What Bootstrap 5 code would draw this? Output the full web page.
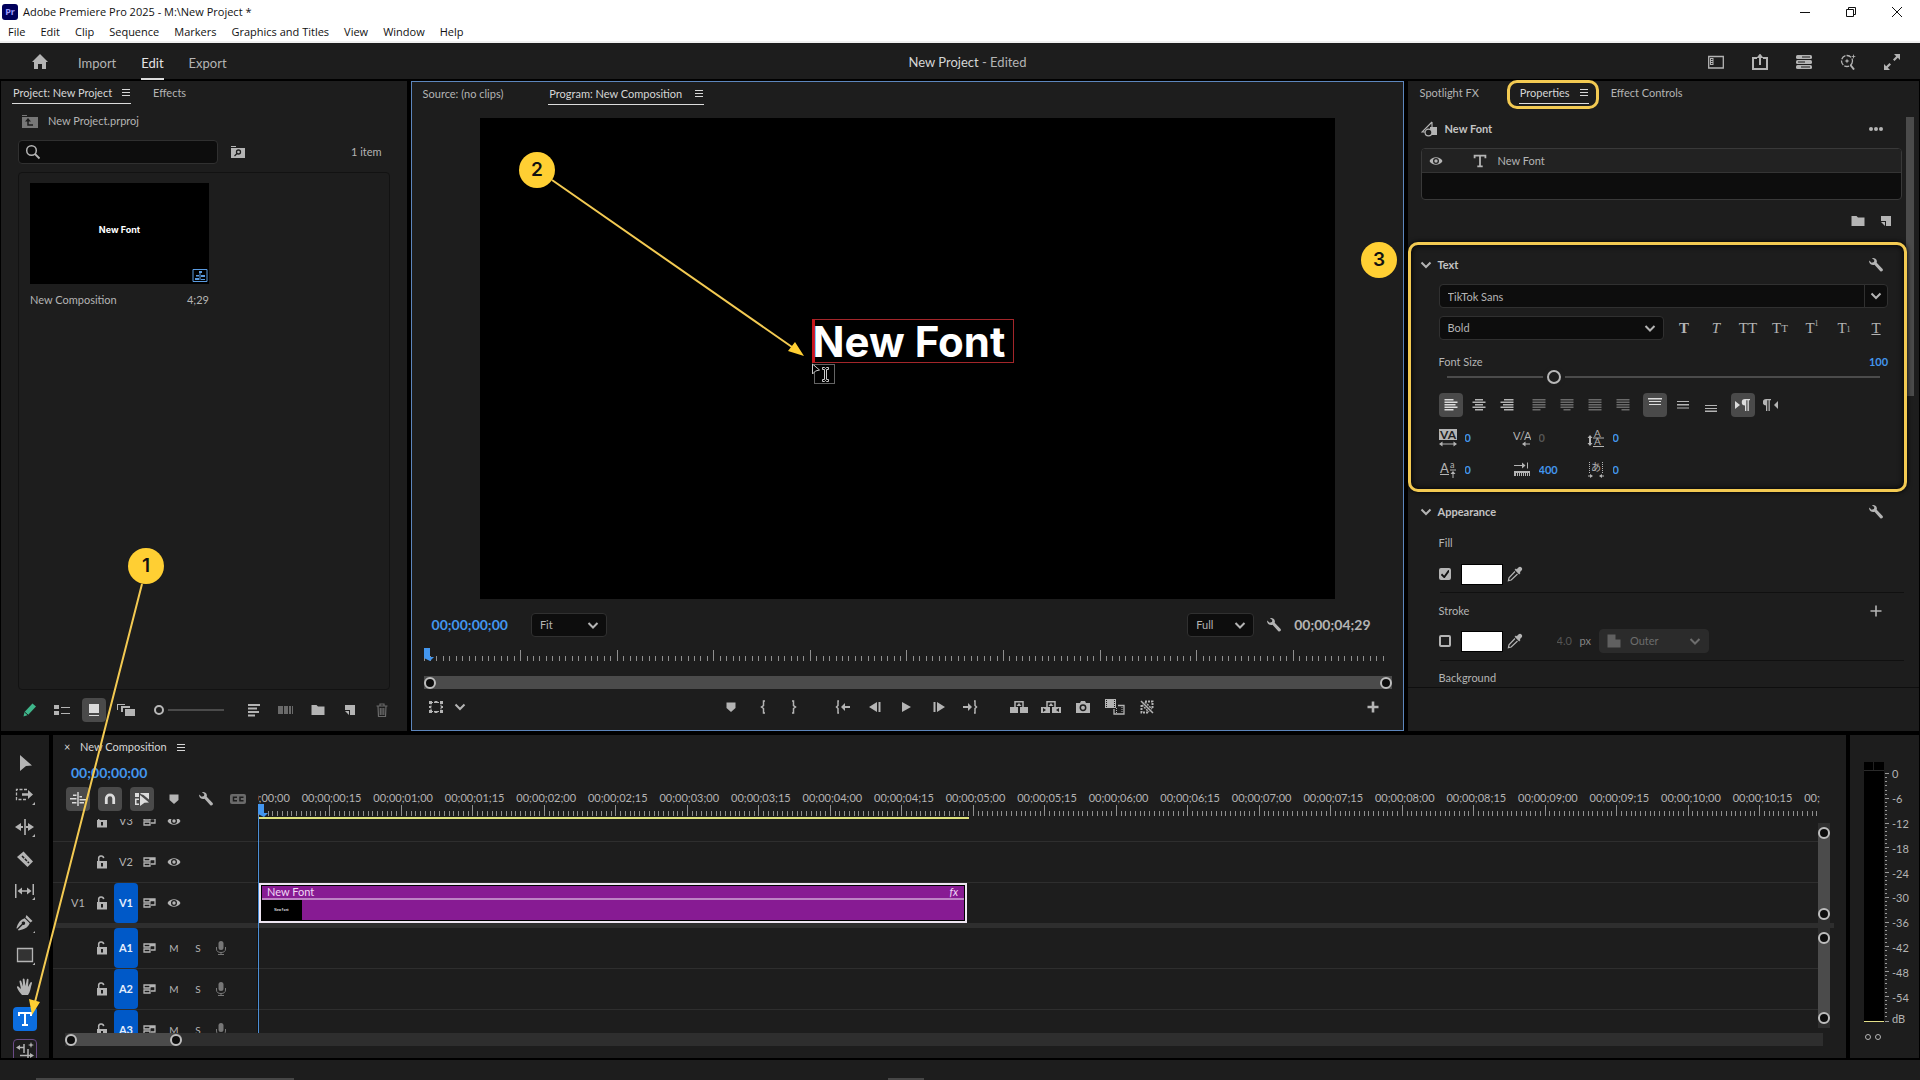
<!DOCTYPE html>
<html lang="en" data-bs-theme="dark">
<head>
<meta charset="utf-8">
<meta name="viewport" content="width=device-width, initial-scale=1">
<title>Adobe Premiere Pro 2025</title>
<link href="https://cdn.jsdelivr.net/npm/bootstrap@5.3.0/dist/css/bootstrap.min.css" rel="stylesheet">
<style>
:root{--panel:#1d1d1d;--well:#0d0d0d;--txt:#b4b4b4;--hi:#d6d6d6;--line:#2e2e2e;--blue:#4396ee;--gold:#ffcf33;--bar:#4b4b4b}
body{background:#000;color:var(--txt);font:400 11px/16px Lato,"Noto Sans",sans-serif;overflow:hidden}
svg{display:block;flex:none}
.ic{width:16px;height:16px;fill:currentColor}
.ib{width:24px;height:24px;padding:0;border:0;border-radius:4px;background:none;color:inherit;display:flex;align-items:center;justify-content:center;flex:none}
.ib.on{background:#4a4a4a;color:#dcdcdc}
.ib.dim{color:#6a6a6a}
.panel{background:var(--panel);min-width:0}
.hi{color:var(--hi)}
.blue{color:var(--blue)}
/* title and menu */
.winbar,.menus{background:#fff;color:#111;font-family:"Open Sans","Noto Sans",sans-serif}
.winbar{height:23px}
.winbar .ib{width:46px;height:20px}
.menus{height:20px;border-bottom:2px solid #f0f0f0;gap:15px;padding-left:8px}
.menus a,.modes a{color:inherit;text-decoration:none}
.prlogo{width:16px;height:16px;border-radius:3px;background:#00005b;color:#9b9bff;font:700 9px/15px "Open Sans",sans-serif;text-align:center;margin:0 5px 0 2px}
.appbar{height:36px;margin-bottom:2px;display:grid;grid-template-columns:1fr auto 1fr;font-size:13px;padding:0 16px 0 31px}
.modes{gap:25px}
.modes a{height:36px;line-height:38px}
.modes a.cur{border-bottom:2px solid #dcdcdc;color:#e4e4e4}
.apptitle{line-height:38px}
.apptools{gap:20px}
/* panels */
.upper{flex:650 1 0;min-height:0;gap:4px;padding:0 1px}
.lower{flex:323 1 0;min-height:0;gap:4px;padding:0 1px;margin-top:4px}
.p-project{flex:406 1 0}
.p-program{flex:992 1 0;border:1px solid #5d86bd}
.p-props{flex:512 1 0;position:relative}
.tabs{height:23px;margin-bottom:1px}
.tabs button{border:0;background:none;color:inherit;padding:1px 1px 0;height:23px;display:flex;align-items:center;justify-content:space-between;gap:10px;border-bottom:1px solid transparent;white-space:nowrap}
.tabs button.cur{color:var(--hi);border-bottom-color:#dcdcdc}
.tabs .wide{min-width:156px}
.burger{width:8px;height:7px;border:solid currentColor;border-width:1px 0;position:relative;flex:none}
.burger::after{content:"";position:absolute;left:0;right:0;top:2px;height:1px;background:currentColor}
.field,.field:focus,.field:disabled{background-color:var(--well);border:1px solid #303030;border-radius:4px;color:var(--txt);font-size:11px;line-height:16px;height:24px;padding:0 8px;box-shadow:none}
.form-select.field{--bs-form-select-bg-img:url("data:image/svg+xml,%3csvg xmlns='http://www.w3.org/2000/svg' viewBox='0 0 12 12'%3e%3cpath fill='none' stroke='%23b4b4b4' stroke-width='2' d='M1.500 4l4.500 4.500L10.500 4'/%3e%3c/svg%3e");background-size:12px 12px;background-position:right 7px center}
.searchbox{width:200px}
.searchbox .ic{position:absolute;left:7px;top:4px}
.searchbox input{width:100%;padding-left:28px}
.binbox{border:1px solid #121212;border-radius:4px;margin:8px 17px 0 17px;padding:10px 11px}
.clipcard{width:179px}
.thumb{aspect-ratio:179/101;background:#000;color:#fff;font:700 9px/16px Inter,"Open Sans",sans-serif;position:relative;padding-bottom:8px}
.thumb svg{position:absolute;right:1px;bottom:0}
.footbar{height:41px;padding:0 13px 2px 17px}
.zoomrange{width:70px}
.rng{appearance:none;background:none;height:12px;margin:0;padding:0}
.rng::-webkit-slider-runnable-track{height:2px;background:#4b4b4b}
.rng::-webkit-slider-thumb{appearance:none;width:14px;height:14px;border-radius:50%;border:2px solid #b8b8b8;background:var(--panel);margin-top:-6px;box-shadow:0 0 0 4px var(--panel)}
.rng.sm::-webkit-slider-thumb{width:10px;height:10px;margin-top:-4px}
/* monitor */
.stagewrap{margin-top:12px;min-height:0}
.stage{aspect-ratio:855/481;height:100%;background:#000}
.caption{position:relative;border:1px solid #a3262a;border-left:3px solid #c7161b;height:44px;width:202px;color:#fff;font:700 42px/44px Inter,"Open Sans",sans-serif;white-space:nowrap;text-indent:-2px;margin-left:11px;margin-bottom:36px}
.caption svg{position:absolute;left:-3px;top:43px}
.tc{font-size:14px;font-weight:700;color:var(--blue)}
.monrow{height:51px;padding:0 32px 0 20px}
.ticks{display:flex;justify-content:space-between;align-items:flex-end;height:11px}
.ticks i{width:1px;height:5px;background:#8f8f8f}
.ticks i.major{height:11px}
.monticks{margin:0 18px 0 12px;position:relative}
.head{position:absolute;left:0;top:-2px}
.zbar{height:13px;background:var(--bar);display:flex;justify-content:space-between;align-items:center}
.knob{width:12px;height:12px;border:2px solid #bdbdbd;border-radius:50%;background:var(--well);flex:none}
.transport{height:36px;margin:0 8px 5px 12px;display:grid;grid-template-columns:294fr 440px 234fr;align-items:center}
/* properties */
.layerbox{height:52px;margin:0 17px 0 13px;border:1px solid #393939;border-radius:4px;background:var(--well);overflow:hidden}
.layer{height:24px;background:#222;border-bottom:1px solid #343434}
.callbox{border:3px solid #f3ca52;border-radius:10px;margin-right:12px;padding:0 16px 7px 28px;position:relative;z-index:1;box-shadow:0 0 6px #000 inset,0 0 5px #000}
.sechead{height:39px;margin-left:-18px;gap:8px;padding-top:1px}
.sechead b,.ttl{color:#c4c4c4;font-weight:700}
.ring::after{content:"";position:absolute;inset:-1px -10px -6px -12px;border:3px solid #f3ca52;border-radius:10px}
.tstyles{gap:8px}
.tstyles .ib{font:15px/20px "Liberation Serif",serif}
.tstyles small{font-size:11px}
.tstyles .ss{font-size:8px}
.vals{height:24px;display:grid;grid-template-columns:74px 74px 74px}
.vals label{gap:8px}
.vals .ic{width:18px;height:18px}
.vals input,.numin{width:30px;border:0;background:none;color:var(--blue);padding:0;font-weight:700;font-size:11px}
.secrule{height:1px;background:#101010;margin-left:32px;margin-right:15px}
.chk{appearance:none;width:12px;height:12px;border:2px solid #b4b4b4;border-radius:2px;margin:0 10px 0 0}
.chk:checked{background:#b4b4b4 url("data:image/svg+xml,%3csvg xmlns='http://www.w3.org/2000/svg' viewBox='0 0 10 10'%3e%3cpath fill='none' stroke='%23111' stroke-width='2' d='M1 5l3 3 5-7'/%3e%3c/svg%3e") center/9px no-repeat}
.sw{appearance:none;width:42px;height:21px;border:1px solid #000;padding:0;background:#fff}
.sw::-webkit-color-swatch-wrapper{padding:0}
.sw::-webkit-color-swatch{border:0;border-radius:0}
.field.off,.field.off:disabled{--bs-form-select-bg-img:url("data:image/svg+xml,%3csvg xmlns='http://www.w3.org/2000/svg' viewBox='0 0 12 12'%3e%3cpath fill='none' stroke='%236d6d6d' stroke-width='2' d='M1.500 4l4.500 4.500L10.500 4'/%3e%3c/svg%3e");background-color:#2b2b2b;border-color:#2b2b2b;color:#6d6d6d;width:110px;padding-left:30px;opacity:1}
.outer{position:relative;margin-left:8px}
.outer>svg{position:absolute;left:7px;top:4px;color:#606060}
.vscroll{position:absolute;right:5px;top:36px;width:8px;height:279px;background:#4b4b4b}
/* timeline */
.p-tools{flex:0 0 48px;padding-top:16px;gap:8px;overflow:hidden}
.p-tools .ic{width:20px;height:20px}
.p-tools .typ{background:#0c6ee0;color:#fff}
.p-tools .gen{border:1px solid #6a4a86}
.p-time{flex:1 1 0}
.p-meter{flex:0 0 69px;padding:27px 0 0 14px}
.tlhead{flex:0 0 205px;padding-left:13px}
.rulerrow{height:32px}
.ruler{margin-right:26px;overflow:hidden;position:relative}
.lbls{height:18px;padding:3px 0 0 2px;display:flex;overflow:hidden}
.lbls span{flex:none;text-align:center;white-space:nowrap}
.workarea{height:2px;margin-top:1px;background:#dde07c}
.vtracks{height:104px;justify-content:flex-end}
.atracks{height:105px}
.trk{height:41px;flex:none;border-bottom:1px solid var(--line)}
.vtracks .trk:last-child{height:40px;border-bottom:0}
.trkhead{flex:0 0 205px;display:grid;grid-template-columns:24px 24px 24px 24px 24px 24px 22px;padding-left:13px;align-items:center;justify-items:center;font-size:11px;border-right:1px solid #111}
.trkhead .tgt{width:24px;height:100%;border:0;padding:0;background:none;color:var(--txt);border-radius:4px}
.trkhead .tgt.on{background:#0059c8;color:#e4eefc;font-weight:700}
.trkhead .ms{border:0;background:none;color:inherit;padding:0;font-size:10px}
.gapbar{height:5px;background:var(--line);margin:0 12px 0 1px}
.clip{height:40px;border:2px solid #efe6f2;outline:1px solid #000;outline-offset:-3px;background:#871b93;color:#f1d8f5;margin-left:1px}
.cliphd{height:15px;line-height:13px;padding:0 7px 0 6px;border-bottom:2px solid #bd83c5}
.clipth{width:41px;height:21px;background:#000;color:#ddd;font:700 3px/20px "Noto Sans",sans-serif;text-align:center}
.vbar{width:12px;margin-right:16px;background:var(--line)}
.vbar div{background:var(--bar);display:flex;flex-direction:column;justify-content:space-between;height:100%;border-radius:6px}
.vbar.v1{margin-top:4px;padding:4px 0 3px}
.vbar.v2{padding:4px 0 9px;margin-bottom:5px;padding-bottom:4px}
.hbar{height:13px;background:var(--line);margin:0 23px 12px 12px}
.hbar .zbar{width:117px;border-radius:6px;background:var(--bar)}
.playline{position:absolute;left:205px;top:29px;bottom:0;width:1px;background:#4c8fd6;z-index:2}
.mbar{width:20px;background:#000;border-bottom:1px solid #e3e08a;position:relative}
.mbar::before{content:"";position:absolute;left:9px;top:0;width:1px;height:8px;background:#222}
.mbar::after{content:"";position:absolute;left:0;right:0;top:8px;height:1px;background:#2a2a2a}
.mticks{width:8px;padding:11px 0 0 1px;display:flex;flex-direction:column;justify-content:space-between}
.mticks i{width:2px;height:1px;background:#9a9a9a}
.mticks i.major{width:4px}
.mlbls{padding-top:4px}
.mfoot{height:36px;padding:12px 0 0 1px;gap:4px}
.mfoot span{width:6px;height:6px;border:1px solid #b4b4b4;border-radius:50%}
.statusbar{height:20px;margin-top:2px;align-items:flex-end}
.peek{height:2px;background:#464646}
.marks{position:absolute;left:0;top:0;z-index:5;pointer-events:none}
</style>
</head>
<body class="vh-100 d-flex flex-column">
<svg width="0" height="0" class="position-absolute" aria-hidden="true"><defs>
<symbol id="home" viewBox="0 0 16 16"><path d="M8 0L0 8h2v7h4v-5h4v5h4V8h2z"/></symbol>
<symbol id="layout" viewBox="0 0 16 16"><path fill="none" stroke="currentColor" stroke-width="1.300" d="M.7 2.500h14.600v11.500H.7z"/><path d="M2 4h3.500v7H2zM3 5v1h1.500V5zm0 2v1h1.500V7zm0 2v1h1.500V9z" fill-rule="evenodd"/></symbol>
<symbol id="share" viewBox="0 0 16 16"><path fill="none" stroke="currentColor" stroke-width="2" d="M5 4H1v11h14V4h-4M8 11V2"/><path d="M8-.5L11.500 4h-7z"/></symbol>
<symbol id="stack" viewBox="0 0 16 16"><rect x="0" y="1" width="16" height="4" rx="1.500"/><rect x="0" y="6" width="16" height="4" rx="1.500"/><rect x="0" y="11" width="16" height="4" rx="1.500"/><path stroke="#1d1d1d" d="M6 3h8M2 8h7M5 13h9"/></symbol>
<symbol id="sparkle" viewBox="0 0 16 16"><circle cx="7" cy="7" r="5.500" fill="none" stroke="currentColor" stroke-width="1.300" stroke-dasharray="5 1.200"/><path stroke="currentColor" stroke-width="2" d="M10.500 11l3.500 4.500"/><path d="M7 4.500l.7 1.800L9.500 7l-1.800.7L7 9.500l-.7-1.800L4.500 7l1.800-.7zM13.500 0l.6 1.900 1.900.6-1.900.6-.6 1.900-.6-1.900-1.900-.6 1.900-.6z"/></symbol>
<symbol id="expand" viewBox="0 0 16 16"><path d="M10 0h6v6l-2.200-2.200L10.500 7 9 5.500l3.200-3.300zM6 16H0v-6l2.200 2.200L5.500 9 7 10.500l-3.200 3.300z"/></symbol>
<symbol id="folderup" viewBox="0 0 16 16"><path d="M0 2h5v1H0zM0 4h16v11H0z"/><path fill="none" stroke="#1d1d1d" stroke-width="1.500" d="M6 7v5h5"/><path fill="#1d1d1d" d="M6 5l3 3.500H3z"/></symbol>
<symbol id="search" viewBox="0 0 16 16"><circle cx="6.500" cy="6.500" r="4.800" fill="none" stroke="currentColor" stroke-width="1.500"/><path stroke="currentColor" stroke-width="1.800" d="M10 10l4.500 4.500"/></symbol>
<symbol id="findfolder" viewBox="0 0 16 16"><path d="M1 2h5v1H1zM1 4h14v10H1z"/><circle cx="8.500" cy="8" r="2" fill="none" stroke="#1d1d1d" stroke-width="1.300"/><path stroke="#1d1d1d" stroke-width="1.300" d="M7 9.500L4.500 12"/></symbol>
<symbol id="seq" viewBox="0 0 16 16"><path fill="none" stroke="currentColor" d="M1 1.500h14v12H1z"/><path d="M7 3h3v2H7zM4 7h3v1.500H4zM9 7h4v2H9zM3 10h4v2H3zM9 11h4v1H9z"/><path stroke="currentColor" d="M8 3v9"/></symbol>
<symbol id="pencil" viewBox="0 0 16 16"><path d="M1.500 14.500l1-4.500 8-8.500 3.500 3L6 13z"/><path stroke="#1d1d1d" d="M2.500 10L6 13"/></symbol>
<symbol id="list" viewBox="0 0 16 16"><path d="M0 3h5v4H0zM0 9h5v4H0zM7 5h9v1H7zM7 11h9v1H7z"/></symbol>
<symbol id="thumbv" viewBox="0 0 16 16"><path d="M3 2h10v9H3zM3 13h10v1H3z"/></symbol>
<symbol id="multi" viewBox="0 0 18 16"><path d="M0 2h8v1H1v5H0zM4 4h9v2H6v4H4zM8 7h10v7H8z"/></symbol>
<symbol id="sort" viewBox="0 0 16 16"><path d="M2 2h12v2H2zM2 5.500h9v2H2zM2 9h11v2H2zM2 12.500h7v2H2z"/></symbol>
<symbol id="bars" viewBox="0 0 16 16"><path d="M0 4h5v8H0zM6 4h4v8H6zM11 4h2v8h-2zM14 4h1v8h-1z"/></symbol>
<symbol id="folder" viewBox="0 0 16 16"><path d="M1.500 3h5l1.500 1.500h6.500V13h-13z"/></symbol>
<symbol id="newitem" viewBox="0 0 16 16"><path d="M3 3h10v10H8V8H3z"/><path d="M3 9l4 4V9z"/></symbol>
<symbol id="trash" viewBox="0 0 16 16"><path fill="none" stroke="currentColor" stroke-width="1.200" d="M2.500 4h11M6 4V2h4v2M4 4l.5 10.500h7L12 4M6.300 6v7M8 6v7M9.800 6v7"/></symbol>
<symbol id="chev" viewBox="0 0 16 16"><path fill="none" stroke="currentColor" stroke-width="2" d="M3.500 5.500L8 10l4.500-4.500"/></symbol>
<symbol id="wrench" viewBox="0 0 16 16"><path d="M4 1.200c2-.6 4.300.5 4.800 2.600.2.800.1 1.400-.1 2l5.700 5.900c.7.700.7 1.700 0 2.300-.7.700-1.700.6-2.300-.1L6.500 7.800C4.300 8.500 1.700 7.300 1.200 5c-.1-.6-.1-1 0-1.400L3.600 5.700 6 4.900l.3-2z"/></symbol>
<symbol id="marker" viewBox="0 0 16 16"><path d="M3.500 3.500h9v5.500L8 13 3.500 9z"/></symbol>
<symbol id="bl" viewBox="0 0 16 16"><path fill="none" stroke="currentColor" stroke-width="1.500" d="M10 2H8.500v4.500L6.500 8l2 1.500V14H10"/></symbol>
<symbol id="br" viewBox="0 0 16 16"><path fill="none" stroke="currentColor" stroke-width="1.500" d="M5 2h1.500v4.500l2 1.500-2 1.500V14H5"/></symbol>
<symbol id="goin" viewBox="0 0 16 16"><path fill="none" stroke="currentColor" stroke-width="1.500" d="M4 2H3v4.500L1.500 8 3 9.500V14h1"/><path d="M6 8l4-4v3h5v2h-5v3z"/></symbol>
<symbol id="goout" viewBox="0 0 16 16"><path fill="none" stroke="currentColor" stroke-width="1.500" d="M11 2h1v4.500L13.500 8 12 9.500V14h-1"/><path d="M9 8L5 4v3H0v2h5v3z"/></symbol>
<symbol id="back" viewBox="0 0 16 16"><path d="M2 8l8-5v10zM11.500 3h2v10h-2z"/></symbol>
<symbol id="fwd" viewBox="0 0 16 16"><path d="M14 8L6 3v10zM2.500 3h2v10h-2z"/></symbol>
<symbol id="play" viewBox="0 0 16 16"><path d="M3 3l9 5-9 5z"/></symbol>
<symbol id="lift" viewBox="0 0 20 16"><path d="M1 8h8v6H1zM11 8h8v6h-8z"/><path fill="none" stroke="currentColor" stroke-width="1.500" d="M6 8V2.800h8V8"/><path d="M10 4l2.500 3h-5z"/></symbol>
<symbol id="extract" viewBox="0 0 20 16"><path fill-rule="evenodd" d="M0 8h9v6H0zM2 9v4l3-2zM11 8h9v6h-9zM18 9v4l-3-2z"/><path fill="none" stroke="currentColor" stroke-width="1.500" d="M6 8V2.800h8V8"/><path d="M10 4l2.500 3h-5z"/></symbol>
<symbol id="camera" viewBox="0 0 16 16"><path d="M1 4h4l1-2h4l1 2h4v10H1z"/><circle cx="8" cy="8.700" r="2.700" fill="none" stroke="#1d1d1d" stroke-width="1.500"/></symbol>
<symbol id="compare" viewBox="0 0 20 16"><path d="M0 0h11v9H0z"/><path fill="none" stroke="currentColor" stroke-width="1.300" d="M9 10v5h10V6.500h-6"/><path stroke="#1d1d1d" stroke-dasharray="1 1" d="M1.500 1v7M9.500 1v7"/><path stroke="currentColor" stroke-dasharray="1 1" d="M11.500 9v5M17 8v6"/></symbol>
<symbol id="fxoff" viewBox="0 0 16 16"><path stroke="currentColor" stroke-width="1.500" d="M2 2l12 12"/><path fill="none" stroke="currentColor" stroke-width="2" stroke-dasharray="2 1" d="M6 2.500h7.500v7.500M2.500 6v7.500H10"/><path stroke="currentColor" stroke-width="1.500" stroke-dasharray="2 1" d="M6 3l7 7M3 6l7 7"/></symbol>
<symbol id="plus" viewBox="0 0 16 16"><path d="M6.700 2.500h2.600v4.200h4.200v2.600H9.300v4.200H6.700V9.300H2.500V6.700h4.200z"/></symbol>
<symbol id="plusthin" viewBox="0 0 16 16"><path d="M7.200 2.500h1.600v4.700h4.700v1.600H8.800v4.700H7.200V8.800H2.500V7.200h4.700z"/></symbol>
<symbol id="safe" viewBox="0 0 16 16"><path fill="none" stroke="currentColor" stroke-dasharray="2 1" d="M3 3.500h10v9H3z"/><path d="M1 2h3v3H1zM12 2h3v3h-3zM1 11h3v3H1zM12 11h3v3h-3zM6.500 2h3v2h-3zM6.500 12h3v2h-3zM1 7h2v2H1zM13 7h2v2h-2z"/></symbol>
<symbol id="eye" viewBox="0 0 16 16"><path fill-rule="evenodd" d="M1.500 8C4 3 12 3 14.500 8 12 13 4 13 1.500 8zM8 5a3 3 0 100 6 3 3 0 000-6z"/><circle cx="8" cy="8" r="1.700"/></symbol>
<symbol id="shapes" viewBox="0 0 16 16"><path fill="none" stroke="currentColor" stroke-width="1.200" d="M11 1L1 11h5M11 1v6"/><path d="M9 6h7v8H9z"/><circle cx="7.500" cy="11.500" r="3.400" fill="#1d1d1d" stroke="currentColor" stroke-width="1.200"/></symbol>
<symbol id="dots" viewBox="0 0 16 16"><circle cx="3" cy="8" r="2"/><circle cx="8" cy="8" r="2"/><circle cx="13" cy="8" r="2"/></symbol>
<symbol id="bigt" viewBox="0 0 20 20"><path d="M3 3h14v4h-2V5h-4v10h2v2H7v-2h2V5H5v2H3z"/></symbol>
<symbol id="al" viewBox="0 0 16 16"><path d="M1.500 2h9v1.500h-9zM1.500 4.500h13V6h-13zM1.500 7h11v1.500h-11zM1.500 9.500h13V11h-13zM1.500 12h9v1.500h-9z"/></symbol>
<symbol id="ac" viewBox="0 0 16 16"><path d="M4 2h8v1.500H4zM1.500 4.500h13V6h-13zM4 7h8v1.500H4zM1.500 9.500h13V11h-13zM4 12h8v1.500H4z"/></symbol>
<symbol id="ar" viewBox="0 0 16 16"><path d="M5 2h9.500v1.500H5zM1.500 4.500h13V6h-13zM4 7h10.500v1.500H4zM1.500 9.500h13V11h-13zM5 12h9.500v1.500H5z"/></symbol>
<symbol id="jl" viewBox="0 0 16 16"><path d="M1.500 2h13v1.500h-13zM1.500 4.500h13V6h-13zM1.500 7h13v1.500h-13zM1.500 9.500h13V11h-13zM1.500 12h8v1.500h-8z"/></symbol>
<symbol id="jc" viewBox="0 0 16 16"><path d="M1.500 2h13v1.500h-13zM1.500 4.500h13V6h-13zM1.500 7h13v1.500h-13zM1.500 9.500h13V11h-13zM4.500 12h7v1.500h-7z"/></symbol>
<symbol id="jj" viewBox="0 0 16 16"><path d="M1.500 2h13v1.500h-13zM1.500 4.500h13V6h-13zM1.500 7h13v1.500h-13zM1.500 9.500h13V11h-13zM1.500 12h13v1.500h-13z"/></symbol>
<symbol id="jr" viewBox="0 0 16 16"><path d="M1.500 2h13v1.500h-13zM1.500 4.500h13V6h-13zM1.500 7h13v1.500h-13zM1.500 9.500h13V11h-13zM6.500 12h8v1.500h-8z"/></symbol>
<symbol id="vt" viewBox="0 0 16 16"><path d="M1 1h14v1.500H1zM2 4h12v1H2zM2 7h12v1H2z"/></symbol>
<symbol id="vm" viewBox="0 0 16 16"><path d="M2 4h12v1H2zM2 7h12v1.500H2zM2 10.500h12v1H2z"/></symbol>
<symbol id="vb" viewBox="0 0 16 16"><path d="M2 8h12v1H2zM2 11h12v1H2zM2 13.500h12V15H2z"/></symbol>
<symbol id="ltr" viewBox="0 0 16 16"><path d="M0 4l5 4-5 4zM15 2H10a3 3 0 000 6.500V14h1.300V3.300h1.200V14h1.300V3.300H15z"/></symbol>
<symbol id="rtl" viewBox="0 0 16 16"><path d="M15 4l-4 4 4 4zM8 2H3a3 3 0 000 6.500V14h1.300V3.300h1.200V14h1.300V3.300H8z"/></symbol>
<symbol id="track" viewBox="0 0 18 18"><path d="M0 0h18v11H0z"/><text x="9" y="10" text-anchor="middle" font-family="Lato" font-weight="700" font-size="12" fill="#1d1d1d">VA</text><path d="M0 15l3.500-2.500v2h11v-2L18 15l-3.500 2.500v-2h-11v2z"/></symbol>
<symbol id="kern" viewBox="0 0 18 18"><text x="0" y="11" font-family="Lato" font-size="11">V/A</text><path d="M9 15l3.500-2.500v2H17v1h-4.500v2z"/></symbol>
<symbol id="lead2" viewBox="0 0 18 18"><text x="7" y="8" font-family="Lato" font-size="10">A</text><text x="7" y="16" font-family="Lato" font-size="10">A</text><path d="M6 8.500h11v1H6zM6 17h11v1H6zM3 6l2.500 3H4v5h1.500L3 17 .5 14H2V9H.5z"/></symbol>
<symbol id="basel" viewBox="0 0 18 18"><text x="1" y="12" font-family="Lato" font-size="13">A</text><text x="11" y="7" font-family="Lato" font-size="9">a</text><path d="M1 13h9v1H1zM11 8.500h6v1h-6zM14 10l2.500 3h-2v4h-1v-4h-2z"/></symbol>
<symbol id="tabw" viewBox="0 0 18 18"><path d="M1 4h8V1.500L12.500 4.500 9 7.500V5H1zM14 1.500h1v6h-1zM1 10h16v5h-1v-3h-1v3h-1v-3h-1v3h-1v-3h-1v3h-1v-3H9v3H8v-3H7v3H6v-3H5v3H4v-3H3v3H1z"/></symbol>
<symbol id="tsume" viewBox="0 0 18 18"><text x="9" y="10" text-anchor="middle" font-family="Noto Sans CJK JP" font-size="10">あ</text><path fill="none" stroke="currentColor" stroke-dasharray="1 1" d="M2.500 1v11M15.500 1v11"/><path d="M6 15l-3-2v1.500H1v1h2V17zM12 15l3-2v1.500h2v1h-2V17z"/></symbol>
<symbol id="dropper" viewBox="0 0 16 16"><path d="M14.500 1.500c1 1 .8 2.300 0 3.100l-1.700 1.700.7.800-1.300 1.300-4.600-4.600 1.300-1.300.8.700 1.700-1.700c.8-.8 2.200-1 3.100 0z"/><path fill="none" stroke="currentColor" stroke-width="1.200" d="M8 5.500l-6 6.300-.6 2.800 2.800-.6 6.300-6"/></symbol>
<symbol id="outerst" viewBox="0 0 16 16"><path d="M1.500 1.500h8v5h5v8h-13z"/></symbol>
<symbol id="arrow" viewBox="0 0 20 20"><path d="M5 2l12 10.500-6 .5-6 5z"/></symbol>
<symbol id="tsel" viewBox="0 0 20 20"><path fill="none" stroke="currentColor" stroke-width="1.300" stroke-dasharray="3 1.500" d="M12 4.500H1.500v10H12"/><path d="M7 8.300h6V5l5 4.500-5 4.500v-3.300H7zM20 20h-3l3-3z"/></symbol>
<symbol id="ripple" viewBox="0 0 20 20"><path d="M9.200 2h1.600v16H9.200zM0 10l6-4v3h2v2H6v3zM19 10l-6-4v3h-2v2h2v3zM20 20h-3l3-3z"/></symbol>
<symbol id="razor" viewBox="0 0 20 20"><path d="M8.500 2.500L18 12.500l-5.500 5.500L2 8z"/><path fill="none" stroke="#1d1d1d" stroke-width="1.500" stroke-dasharray="3 1" d="M7 7l7 7"/></symbol>
<symbol id="slip" viewBox="0 0 20 20"><path d="M0 3h1.500v14H0zM17.500 3H19v11h-1.500zM2.500 10L7 6.500v2.800h5V6.500l4.500 3.500-4.500 3.500v-2.800H7v2.800zM20 19h-3l3-3z"/></symbol>
<symbol id="pen" viewBox="0 0 20 20"><path fill-rule="evenodd" d="M11.500 2l6 6-2 1.500-5-5zM9.700 5.300l5 5c-2 5-6 6-11 7.200l-.8-.8 5-5a1.700 1.700 0 10-1-1l-5 5L1.500 15C3 10 5 7 9.700 5.300zM20 20h-2l2-2z"/></symbol>
<symbol id="rect" viewBox="0 0 20 20"><path fill="#333" stroke="currentColor" stroke-width="1.300" d="M2.500 3.500h15v13h-15z"/><path d="M20 20h-2.500l2.500-2.500z"/></symbol>
<symbol id="hand" viewBox="0 0 20 20"><path d="M7 18c-2-2-4-5-5-7.500-.3-1.200 1-1.600 1.600-.8L6 12 4.500 4.700c-.2-1.300 1.400-1.600 1.800-.4L8 9.500l-.3-7c0-1.400 1.700-1.400 1.900 0L10.500 9l1.200-6.300c.3-1.300 1.900-1 1.800.3L13 10l2.300-4.300c.6-1.200 2-.5 1.600.7C15.500 10.500 15.500 15 13 18z"/></symbol>
<symbol id="genx" viewBox="0 0 20 20"><path fill="none" stroke="currentColor" stroke-width="1.500" d="M3 6.500h6M9 3v9M5 14.500h8M13 8v12M13 14.500h4"/><path d="M1 6.500L5 4v5zM16 1l.8 2.200L19 4l-2.200.8L16 7l-.8-2.200L13 4l2.200-.8zM15 12l4 2.500-4 2.500z"/></symbol>
<symbol id="snapseq" viewBox="0 0 16 16"><path d="M7.300 1h1.400v14H7.300zM3 3.500h3.500V5H3zM0 7h6.500v1.500H0zM2 11h4.500v1.500H2zM9.500 5H12v1.500H9.500zM9.500 8H16v1.500H9.500zM9.500 11H14v1.500H9.500z"/></symbol>
<symbol id="magnet" viewBox="0 0 16 16"><path fill="none" stroke="currentColor" stroke-width="2.800" d="M4.300 13V7.500a3.700 3.700 0 017.400 0V13"/></symbol>
<symbol id="linked" viewBox="0 0 16 16"><path d="M1 2h4v4H1zM6.500 2H15v6.500L9.500 4l-3-1zM1 7.500h4V9H2.500v3.500H5V14H1zM6 4l9 7.500-4.500.3L6 15z"/></symbol>
<symbol id="cc" viewBox="0 0 16 16"><rect y="3" width="16" height="10" rx="2"/><path fill="none" stroke="#1d1d1d" stroke-width="1.500" d="M7 6.300H3.500v3.400H7M13.500 6.300H10v3.400h3.500"/></symbol>
<symbol id="lock" viewBox="0 0 12 14"><path fill-rule="evenodd" d="M1 6h10v7.500H1zM5 8v3.500h2V8z"/><path fill="none" stroke="currentColor" stroke-width="1.500" d="M2.700 6V4a2.500 2.500 0 015-.8"/></symbol>
<symbol id="sync" viewBox="0 0 14 14"><path fill="none" stroke="currentColor" stroke-width="1.300" d="M1 3h6v3H1zM1 8h6v3H1zM7 3h5v6H8M7 4.500h5"/></symbol>
<symbol id="mic" viewBox="0 0 12 16"><rect x="3.500" y="1" width="5" height="9" rx="2.500"/><path fill="none" stroke="currentColor" d="M1.500 7v2a4.500 3.500 0 009 0V7M6 12v2.500M3 14.500h6"/></symbol>
<symbol id="phead" viewBox="0 0 10 14"><path fill="#4396ee" d="M0 0h6v9h4l-4 4-6-3z"/></symbol>
</defs></svg>

<header>
  <div class="winbar d-flex align-items-center">
    <span class="prlogo">Pr</span><span class="text-nowrap">Adobe Premiere Pro 2025 - M:\New Project *</span>
    <div class="d-flex ms-auto">
      <button class="ib" aria-label="Minimize"><svg width="12" height="12" stroke="#111"><path d="M1 6.500h10"/></svg></button>
      <button class="ib" aria-label="Restore"><svg width="12" height="12" fill="none" stroke="#111"><path d="M1.500 3.500h7v7h-7zM3.500 3V1.500h7v7H9"/></svg></button>
      <button class="ib" aria-label="Close"><svg width="12" height="12" stroke="#111"><path d="M1 1l10 10M11 1L1 11"/></svg></button>
    </div>
  </div>
  <nav class="menus d-flex align-items-center" aria-label="Menu">
    <a href="#">File</a><a href="#">Edit</a><a href="#">Clip</a><a href="#">Sequence</a><a href="#">Markers</a><a href="#">Graphics and Titles</a><a href="#">View</a><a href="#">Window</a><a href="#">Help</a>
  </nav>
  <div class="appbar panel">
    <nav class="modes d-flex align-items-center" aria-label="Workspace">
      <svg class="ic" style="width:18px"><use href="#home"/></svg>
      <a href="#" class="ms-1">Import</a><a href="#" class="cur">Edit</a><a href="#">Export</a>
    </nav>
    <div class="apptitle hi">New Project <span style="color:#b4b4b4">- Edited</span></div>
    <div class="apptools d-flex align-items-center justify-content-end">
      <button class="ib" aria-label="Workspaces"><svg class="ic"><use href="#layout"/></svg></button>
      <button class="ib" aria-label="Quick export"><svg class="ic"><use href="#share"/></svg></button>
      <button class="ib" aria-label="Progress"><svg class="ic"><use href="#stack"/></svg></button>
      <button class="ib" aria-label="Discover"><svg class="ic"><use href="#sparkle"/></svg></button>
      <button class="ib" aria-label="Full screen"><svg class="ic"><use href="#expand"/></svg></button>
    </div>
  </div>
</header>

<main class="upper d-flex">
  <section class="panel p-project d-flex flex-column" aria-label="Project">
    <div class="tabs d-flex" style="gap:21px;padding-left:11px">
      <button class="cur">Project: New Project <span class="burger"></span></button><button>Effects</button>
    </div>
    <div class="d-flex align-items-center" style="height:32px;padding-left:21px;gap:10px"><svg class="ic" style="color:#777"><use href="#folderup"/></svg><span>New Project.prproj</span></div>
    <div class="d-flex align-items-center" style="margin:3px 25px 0 17px">
      <div class="searchbox position-relative"><input class="field" type="search" aria-label="Search bin"><svg class="ic"><use href="#search"/></svg></div>
      <svg class="ic" style="margin-left:12px"><use href="#findfolder"/></svg>
      <span class="ms-auto">1 item</span>
    </div>
    <div class="binbox flex-grow-1">
      <div class="clipcard">
        <div class="thumb d-flex align-items-center justify-content-center"><span>New Font</span><svg width="16" height="16" fill="#5b9be0" color="#5b9be0"><use href="#seq"/></svg></div>
        <div class="d-flex justify-content-between mt-2"><span>New Composition</span><span>4;29</span></div>
      </div>
    </div>
    <div class="footbar d-flex align-items-center">
      <button class="ib" style="color:#3fb68b" aria-label="Writable"><svg class="ic"><use href="#pencil"/></svg></button>
      <button class="ib ms-2" aria-label="List view"><svg class="ic"><use href="#list"/></svg></button>
      <button class="ib on ms-2" aria-label="Icon view"><svg class="ic"><use href="#thumbv"/></svg></button>
      <button class="ib ms-2" aria-label="Freeform view"><svg class="ic" style="width:18px"><use href="#multi"/></svg></button>
      <input class="rng sm zoomrange ms-3" type="range" min="0" max="100" value="0" aria-label="Thumbnail size">
      <div class="d-flex ms-auto gap-2">
        <button class="ib" aria-label="Sort"><svg class="ic"><use href="#sort"/></svg></button>
        <button class="ib dim" aria-label="Automate to sequence"><svg class="ic"><use href="#bars"/></svg></button>
        <button class="ib" aria-label="New bin"><svg class="ic"><use href="#folder"/></svg></button>
        <button class="ib" aria-label="New item"><svg class="ic"><use href="#newitem"/></svg></button>
        <button class="ib dim" aria-label="Delete"><svg class="ic"><use href="#trash"/></svg></button>
      </div>
    </div>
  </section>

  <section class="panel p-program d-flex flex-column" aria-label="Program monitor">
    <div class="tabs d-flex" style="gap:44px;padding-left:10px">
      <button>Source: (no clips)</button><button class="cur wide">Program: New Composition <span class="burger"></span></button>
    </div>
    <div class="stagewrap flex-grow-1 d-flex justify-content-center">
      <div class="stage d-flex align-items-center justify-content-center">
        <div class="caption">New Font
          <svg width="26" height="26" fill="none" stroke="#c9c9c9"><path stroke-dasharray="1 1" d="M2.500 1.500h20v19h-20z"/><path fill="#000" d="M.5 1v10l3-3 4-1z"/><path d="M10.500 4.500h2l1 1 1-1h2v2h-2v10h2v2h-2l-1-1-1 1h-2v-2h2v-10h-2z"/></svg>
        </div>
      </div>
    </div>
    <div class="monrow d-flex align-items-center">
      <span class="tc">00;00;00;00</span>
      <select class="form-select field" style="width:76px;margin-left:23px" aria-label="Zoom level"><option>Fit</option></select>
      <select class="form-select field ms-auto" style="width:67px" aria-label="Playback resolution"><option>Full</option></select>
      <button class="ib ms-2" aria-label="Settings"><svg class="ic"><use href="#wrench"/></svg></button>
      <span class="tc ms-2" style="color:#b4b4b4">00;00;04;29</span>
    </div>
    <div class="monticks"><div class="ticks" data-count="150" data-major="15"></div><svg class="head" width="10" height="14"><use href="#phead"/></svg></div>
    <div class="zbar" style="margin:15px 11px 0 12px"><span class="knob"></span><span class="knob"></span></div>
    <div class="transport">
      <div class="d-flex"><button class="ib" aria-label="Safe margins"><svg class="ic"><use href="#safe"/></svg></button><button class="ib" aria-label="More"><svg class="ic"><use href="#chev"/></svg></button></div>
      <div class="d-flex gap-2">
        <button class="ib" aria-label="Add marker"><svg class="ic"><use href="#marker"/></svg></button>
        <button class="ib" aria-label="Mark in"><svg class="ic"><use href="#bl"/></svg></button>
        <button class="ib" aria-label="Mark out"><svg class="ic"><use href="#br"/></svg></button>
        <button class="ib ms-3" aria-label="Go to in"><svg class="ic"><use href="#goin"/></svg></button>
        <button class="ib" aria-label="Step back"><svg class="ic"><use href="#back"/></svg></button>
        <button class="ib" aria-label="Play"><svg class="ic"><use href="#play"/></svg></button>
        <button class="ib" aria-label="Step forward"><svg class="ic"><use href="#fwd"/></svg></button>
        <button class="ib" aria-label="Go to out"><svg class="ic"><use href="#goout"/></svg></button>
        <button class="ib ms-3" aria-label="Lift"><svg class="ic" style="width:20px"><use href="#lift"/></svg></button>
        <button class="ib" aria-label="Extract"><svg class="ic" style="width:20px"><use href="#extract"/></svg></button>
        <button class="ib" aria-label="Export frame"><svg class="ic"><use href="#camera"/></svg></button>
        <button class="ib" aria-label="Comparison view"><svg class="ic" style="width:20px"><use href="#compare"/></svg></button>
        <button class="ib" aria-label="Global FX mute"><svg class="ic"><use href="#fxoff"/></svg></button>
      </div>
      <div class="d-flex justify-content-end" style="padding-right:10px"><button class="ib" aria-label="Button editor"><svg class="ic"><use href="#plus"/></svg></button></div>
    </div>
  </section>

  <section class="panel p-props" aria-label="Properties">
    <div class="tabs d-flex" style="gap:39px;padding-left:11px">
      <button>Spotlight FX</button><button class="cur ring position-relative">Properties <span class="burger"></span></button><button style="margin-left:-18px">Effect Controls</button>
    </div>
    <div class="vscroll"></div>
    <div class="d-flex align-items-center" style="height:38px;margin:6px 35px 0 13px;gap:8px"><svg class="ic"><use href="#shapes"/></svg><span class="ttl">New Font</span><svg class="ic ms-auto"><use href="#dots"/></svg></div>
    <div class="layerbox"><div class="layer d-flex align-items-center">
      <svg class="ic" style="margin:0 27px 0 6px"><use href="#eye"/></svg><svg class="ic" style="width:18px;height:18px"><use href="#bigt"/></svg><span style="margin-left:9px">New Font</span></div></div>
    <div class="d-flex align-items-center justify-content-end gap-1" style="height:42px;padding-right:21px">
      <button class="ib" aria-label="New group"><svg class="ic"><use href="#folder"/></svg></button><button class="ib" aria-label="New layer"><svg class="ic"><use href="#newitem"/></svg></button></div>

    <div class="callbox">
      <div class="sechead d-flex align-items-center"><svg class="ic" style="margin:0 -4px 0 -3px"><use href="#chev"/></svg><b>Text</b><svg class="ic ms-auto me-1"><use href="#wrench"/></svg></div>
      <div class="input-group flex-nowrap"><input class="form-control field" type="text" value="TikTok Sans" aria-label="Font family"><button class="ib field p-0" style="width:24px;background:var(--well)" aria-label="Choose font"><svg class="ic"><use href="#chev"/></svg></button></div>
      <div class="d-flex justify-content-between mt-2">
        <select class="form-select field" style="width:225px" aria-label="Font style"><option>Bold</option></select>
        <div class="tstyles d-flex">
          <button class="ib" aria-label="Faux bold"><b>T</b></button><button class="ib" aria-label="Faux italic"><em>T</em></button><button class="ib" aria-label="All caps">TT</button><button class="ib" aria-label="Small caps">T<small>T</small></button><button class="ib" aria-label="Superscript">T<sup class="ss">1</sup></button><button class="ib" aria-label="Subscript">T<sub class="ss">1</sub></button><button class="ib" aria-label="Underline"><u>T</u></button>
        </div>
      </div>
      <div class="d-flex justify-content-between" style="margin-top:14px;height:18px"><label for="fs">Font Size</label><b class="blue">100</b></div>
      <div class="d-flex align-items-center px-2" style="height:10px"><input id="fs" class="rng w-100" type="range" min="0" max="400" value="96"></div>
      <div class="d-flex" style="gap:4px;margin-top:11px">
        <button class="ib on" aria-label="Left"><svg class="ic"><use href="#al"/></svg></button><button class="ib" aria-label="Center"><svg class="ic"><use href="#ac"/></svg></button><button class="ib" aria-label="Right"><svg class="ic"><use href="#ar"/></svg></button>
        <button class="ib dim ms-1" aria-label="Justify left"><svg class="ic"><use href="#jl"/></svg></button><button class="ib dim" aria-label="Justify center"><svg class="ic"><use href="#jc"/></svg></button><button class="ib dim" aria-label="Justify all"><svg class="ic"><use href="#jj"/></svg></button><button class="ib dim" aria-label="Justify right"><svg class="ic"><use href="#jr"/></svg></button>
        <button class="ib on ms-1" aria-label="Top"><svg class="ic"><use href="#vt"/></svg></button><button class="ib" aria-label="Middle"><svg class="ic"><use href="#vm"/></svg></button><button class="ib" aria-label="Bottom"><svg class="ic"><use href="#vb"/></svg></button>
        <button class="ib on ms-1" aria-label="Left to right"><svg class="ic"><use href="#ltr"/></svg></button><button class="ib" aria-label="Right to left"><svg class="ic"><use href="#rtl"/></svg></button>
      </div>
      <div class="vals" style="margin-top:9px">
        <label class="d-flex align-items-center"><svg class="ic"><use href="#track"/></svg><input value="0" aria-label="Tracking"></label>
        <label class="d-flex align-items-center"><svg class="ic"><use href="#kern"/></svg><input value="0" aria-label="Kerning" style="color:#555"></label>
        <label class="d-flex align-items-center"><svg class="ic"><use href="#lead2"/></svg><input value="0" aria-label="Leading"></label>
      </div>
      <div class="vals mt-2">
        <label class="d-flex align-items-center"><svg class="ic"><use href="#basel"/></svg><input value="0" aria-label="Baseline shift"></label>
        <label class="d-flex align-items-center"><svg class="ic"><use href="#tabw"/></svg><input value="400" aria-label="Tab width"></label>
        <label class="d-flex align-items-center"><svg class="ic"><use href="#tsume"/></svg><input value="0" aria-label="Tsume"></label>
      </div>
    </div>

    <div class="sechead d-flex align-items-center" style="height:38px;margin:0 35px 0 13px"><svg class="ic" style="margin:0 -4px 0 -3px"><use href="#chev"/></svg><b>Appearance</b><svg class="ic ms-auto"><use href="#wrench"/></svg></div>
    <div style="padding:5px 0 5px 31px;height:26px">Fill</div>
    <div class="d-flex align-items-center" style="height:36px;padding-left:31px"><input class="chk" type="checkbox" checked aria-label="Fill"><input class="sw" type="color" value="#ffffff" aria-label="Fill color"><svg class="ic" style="margin-left:4px"><use href="#dropper"/></svg></div>
    <div class="secrule"></div>
    <div class="d-flex align-items-center justify-content-between" style="height:36px;padding:0 35px 0 31px"><span>Stroke</span><svg class="ic"><use href="#plusthin"/></svg></div>
    <div class="d-flex align-items-center" style="height:31px;padding:0 0 7px 31px"><input class="chk" type="checkbox" aria-label="Stroke"><input class="sw" type="color" value="#ffffff" aria-label="Stroke color"><svg class="ic" style="margin-left:4px"><use href="#dropper"/></svg>
      <input class="numin" style="width:23px;margin-left:34px;color:#555;font-weight:400" value="4.0" aria-label="Stroke width"><span style="color:#858585">px</span>
      <div class="outer"><select class="form-select field off" disabled aria-label="Stroke position"><option>Outer</option></select><svg class="ic"><use href="#outerst"/></svg></div></div>
    <div class="secrule"></div>
    <div style="padding:9px 0 0 31px;height:27px;border-bottom:1px solid #0e0e0e">Background</div>
  </section>
</main>

<section class="lower d-flex">
  <nav class="panel p-tools d-flex flex-column align-items-center" aria-label="Tools">
    <button class="ib" aria-label="Selection"><svg class="ic"><use href="#arrow"/></svg></button>
    <button class="ib" aria-label="Track select"><svg class="ic"><use href="#tsel"/></svg></button>
    <button class="ib" aria-label="Ripple edit"><svg class="ic"><use href="#ripple"/></svg></button>
    <button class="ib" aria-label="Razor"><svg class="ic"><use href="#razor"/></svg></button>
    <button class="ib" aria-label="Slip"><svg class="ic"><use href="#slip"/></svg></button>
    <button class="ib" aria-label="Pen"><svg class="ic"><use href="#pen"/></svg></button>
    <button class="ib" aria-label="Rectangle"><svg class="ic"><use href="#rect"/></svg></button>
    <button class="ib" aria-label="Hand"><svg class="ic"><use href="#hand"/></svg></button>
    <button class="ib typ" aria-label="Type"><svg class="ic"><use href="#bigt"/></svg></button>
    <button class="ib gen" aria-label="Generative extend"><svg class="ic"><use href="#genx"/></svg></button>
  </nav>

  <div class="panel p-time d-flex flex-column">
    <div class="d-flex align-items-center hi" style="height:24px;padding-left:11px"><span style="width:16px">×</span><span style="padding-right:10px">New Composition</span><span class="burger"></span></div>
    <div class="tc" style="height:28px;line-height:28px;padding-left:18px">00;00;00;00</div>
    <div class="position-relative">
      <div class="playline"></div>
      <div class="rulerrow d-flex">
        <div class="tlhead d-flex align-items-start gap-2">
          <button class="ib on" aria-label="Insert as nest"><svg class="ic"><use href="#snapseq"/></svg></button><button class="ib on" aria-label="Snap"><svg class="ic"><use href="#magnet"/></svg></button><button class="ib on" aria-label="Linked selection"><svg class="ic"><use href="#linked"/></svg></button><button class="ib" aria-label="Marker"><svg class="ic"><use href="#marker"/></svg></button><button class="ib" aria-label="Settings"><svg class="ic"><use href="#wrench"/></svg></button><button class="ib dim" aria-label="Captions"><svg class="ic"><use href="#cc"/></svg></button>
        </div>
        <div class="ruler flex-grow-1">
          <div class="lbls" id="lbls"></div>
          <div class="ticks" data-count="328" data-major="15"></div>
          <div class="workarea" style="width:45.5%"></div>
          <svg class="head" style="top:17px" width="10" height="14"><use href="#phead"/></svg>
        </div>
      </div>
      <div class="d-flex">
        <div class="vtracks flex-grow-1 d-flex flex-column overflow-hidden">
          <div class="trk d-flex"><div class="trkhead"><span></span><svg width="12" height="14" fill="currentColor"><use href="#lock"/></svg><button class="tgt">V3</button><svg width="14" height="14"><use href="#sync"/></svg><svg class="ic"><use href="#eye"/></svg></div></div>
          <div class="trk d-flex"><div class="trkhead"><span></span><svg width="12" height="14" fill="currentColor"><use href="#lock"/></svg><button class="tgt">V2</button><svg width="14" height="14"><use href="#sync"/></svg><svg class="ic"><use href="#eye"/></svg></div></div>
          <div class="trk d-flex"><div class="trkhead"><span>V1</span><svg width="12" height="14" fill="currentColor"><use href="#lock"/></svg><button class="tgt on">V1</button><svg width="14" height="14"><use href="#sync"/></svg><svg class="ic"><use href="#eye"/></svg></div>
            <div class="flex-grow-1"><div class="clip" style="width:45.4%"><div class="cliphd d-flex justify-content-between"><span>New Font</span><em>fx</em></div><div class="clipth">New Font</div></div></div></div>
        </div>
        <div class="vbar v1"><div><span class="knob"></span><span class="knob"></span></div></div>
      </div>
      <div class="gapbar"></div>
      <div class="d-flex">
        <div class="atracks flex-grow-1 overflow-hidden">
          <div class="trk d-flex"><div class="trkhead"><span></span><svg width="12" height="14" fill="currentColor"><use href="#lock"/></svg><button class="tgt on">A1</button><svg width="14" height="14"><use href="#sync"/></svg><button class="ms">M</button><button class="ms">S</button><svg width="12" height="16" fill="#777" color="#777"><use href="#mic"/></svg></div></div>
          <div class="trk d-flex"><div class="trkhead"><span></span><svg width="12" height="14" fill="currentColor"><use href="#lock"/></svg><button class="tgt on">A2</button><svg width="14" height="14"><use href="#sync"/></svg><button class="ms">M</button><button class="ms">S</button><svg width="12" height="16" fill="#777" color="#777"><use href="#mic"/></svg></div></div>
          <div class="trk d-flex"><div class="trkhead"><span></span><svg width="12" height="14" fill="currentColor"><use href="#lock"/></svg><button class="tgt on">A3</button><svg width="14" height="14"><use href="#sync"/></svg><button class="ms">M</button><button class="ms">S</button><svg width="12" height="16" fill="#777" color="#777"><use href="#mic"/></svg></div></div>
        </div>
        <div class="vbar v2"><div><span class="knob"></span><span class="knob"></span></div></div>
      </div>
    </div>
    <div class="hbar"><div class="zbar"><span class="knob"></span><span class="knob"></span></div></div>
  </div>

  <aside class="panel p-meter d-flex flex-column" aria-label="Audio meters">
    <div class="d-flex flex-grow-1">
      <div class="mbar"></div>
      <div class="mticks" data-count="61" data-major="6"></div>
      <div class="mlbls d-flex flex-column"><div class="d-flex flex-column justify-content-between flex-grow-1"><span>0</span><span>-6</span><span>-12</span><span>-18</span><span>-24</span><span>-30</span><span>-36</span><span>-42</span><span>-48</span><span>-54</span></div><span style="margin:5px 0 -5px">dB</span></div>
    </div>
    <div class="mfoot d-flex"><span></span><span></span></div>
  </aside>
</section>
<footer class="panel statusbar d-flex"><div class="peek" style="width:258px;margin-left:36px"></div><div class="peek" style="width:36px;margin-left:594px"></div></footer>

<svg class="marks" width="1920" height="1080" aria-label="Step markers">
  <g stroke="#f3ca52" stroke-width="2"><path d="M142 584L35 1002M552 180l240 167"/></g>
  <g fill="#ffcf33"><path d="M32 1015l-3-16 11 3zM804 356l-16-5 7-9z"/><circle cx="146" cy="566" r="18"/><circle cx="537" cy="170" r="18"/><circle cx="1379" cy="260" r="18"/></g>
  <g font-family="Inter" font-size="19" font-weight="600" text-anchor="middle" fill="#111"><text x="146" y="572">1</text><text x="537" y="176">2</text><text x="1379" y="266">3</text></g>
</svg>
<script src="https://cdn.jsdelivr.net/npm/bootstrap@5.3.0/dist/js/bootstrap.bundle.min.js"></script>
<script>
// tick marks for the rulers and the audio meter
document.querySelectorAll('[data-count]').forEach(function (el) {
  for (var i = 0; i < +el.dataset.count; i++) {
    var t = document.createElement('i');
    if (i % +el.dataset.major === 0) t.className = 'major';
    el.appendChild(t);
  }
});
// timecode labels, one each 15 frames
var lbls = document.getElementById('lbls'), step = 100 * 15 / 327;
for (var k = 0; k < 23; k++) {
  var s = document.createElement('span');
  s.textContent = '00;00;' + String(Math.floor(k / 2)).padStart(2, '0') + ';' + (k % 2 ? '15' : '00');
  s.style.width = step + '%';
  if (!k) s.style.marginLeft = -step / 2 + '%';
  lbls.appendChild(s);
}
</script>
</body>
</html>
